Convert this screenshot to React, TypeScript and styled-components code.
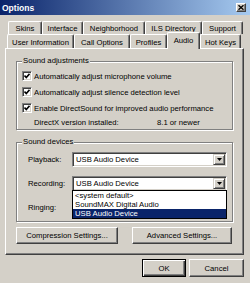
import React from "react";
import styled, { createGlobalStyle } from "styled-components";

const face = "#d4d0c8";
const shadow = "#808080";
const darkShadow = "#404040";
const navy = "#0a246a";

const GlobalStyle = createGlobalStyle`
  html, body {
    margin: 0;
    padding: 0;
    background: ${face};
  }
  body {
    font-family: "Liberation Sans", Arial, sans-serif;
    font-size: 7.7px;
    color: #000;
  }
`;

const Window = styled.div`
  width: 250px;
  height: 283px;
  overflow: hidden;
  background: ${face};
  display: flex;
  flex-direction: column;
`;

const TitleBar = styled.div`
  flex: none;
  height: 15px;
  display: flex;
  align-items: center;
  justify-content: space-between;
  padding: 0 4px 0 2px;
  background: linear-gradient(to right, ${navy}, #a6caf0);
  color: #fff;
  font-weight: bold;
  font-size: 8.5px;
`;

const CloseButton = styled.div`
  width: 10px;
  height: 9px;
  box-sizing: border-box;
  background: ${face};
  border: 1px solid;
  border-color: #fff ${darkShadow} ${darkShadow} #fff;
  box-shadow: inset -1px -1px ${shadow};
  display: flex;
  align-items: center;
  justify-content: center;
`;

const Body = styled.div`
  padding: 6px 6px 0 5px;
  display: flex;
  flex-direction: column;
`;

const TabRow = styled.div<{ $indent: number; $height: number }>`
  display: flex;
  align-items: flex-end;
  height: ${(p) => p.$height}px;
  padding-left: ${(p) => p.$indent}px;
`;

const Tab = styled.div<{ $width: number; $selected?: boolean; $front?: boolean }>`
  position: relative;
  z-index: ${(p) => (p.$selected ? 2 : 0)};
  width: ${(p) => p.$width}px;
  height: ${(p) => (p.$selected ? "calc(100% + 3px)" : "100%")};
  margin-bottom: ${(p) => (p.$selected ? "-1px" : "0")};
  box-sizing: border-box;
  flex: none;
  background: ${face};
  border-top: 1px solid #fff;
  border-left: 1px solid #fff;
  border-right: 1px solid ${darkShadow};
  box-shadow: inset -1px 0 ${shadow};
  border-radius: 2px 2px 0 0;
  display: flex;
  justify-content: center;
  align-items: center;
  padding-top: ${(p) => (p.$front && !p.$selected ? "2px" : "0")};
  padding-bottom: ${(p) => (p.$selected ? "2px" : "0")};
  white-space: nowrap;
`;

const Panel = styled.div`
  height: 207px;
  box-sizing: border-box;
  border: 1px solid;
  border-color: #fff ${darkShadow} ${darkShadow} #fff;
  box-shadow: inset -1px -1px ${shadow};
  padding: 7px 10px 0 10px;
  display: flex;
  flex-direction: column;
`;

const GroupBox = styled.fieldset<{ $top?: number; $padTop: number; $padBottom: number }>`
  margin: ${(p) => p.$top ?? 0}px 0 0 0;
  min-width: 0;
  border: 1px solid ${shadow};
  box-shadow: 1px 1px 0 #fff, inset 1px 1px 0 #fff;
  padding: ${(p) => p.$padTop}px 5px ${(p) => p.$padBottom}px 5px;
  display: flex;
  flex-direction: column;
`;

const Caption = styled.legend`
  padding: 0 1px;
  margin: 0;
  line-height: 10px;
  background: ${face};
`;

const CheckRow = styled.div`
  height: 16px;
  display: flex;
  align-items: center;
  gap: 2px;
  white-space: nowrap;
`;

const CheckBox = styled.span`
  flex: none;
  width: 10px;
  height: 10px;
  box-sizing: border-box;
  background: #fff;
  border: 1px solid;
  border-color: ${shadow} #fff #fff ${shadow};
  box-shadow: inset 1px 1px ${darkShadow}, inset -1px -1px ${face};
  display: flex;
  align-items: center;
  justify-content: center;
`;

const InfoRow = styled.div`
  height: 13px;
  display: flex;
  align-items: center;
  padding-left: 12px;
`;

const InfoLabel = styled.span`
  width: 123px;
  flex: none;
`;

const DeviceList = styled.div`
  display: flex;
  flex-direction: column;
  gap: 9px;
  padding-left: 6px;
`;

const DeviceRow = styled.div`
  height: 15px;
  display: flex;
  align-items: center;
`;

const DeviceLabel = styled.span`
  width: 44px;
  flex: none;
`;

const Combo = styled.div`
  position: relative;
  width: 155px;
  height: 15px;
  box-sizing: border-box;
  background: #fff;
  border: 1px solid;
  border-color: ${shadow} #fff #fff ${shadow};
  box-shadow: inset 1px 1px ${darkShadow}, inset -1px -1px ${face};
  display: flex;
  align-items: center;
  padding: 1px 1px 1px 3px;
  white-space: nowrap;
`;

const ComboText = styled.span`
  flex: 1;
`;

const ArrowButton = styled.span`
  flex: none;
  width: 12px;
  height: 11px;
  box-sizing: border-box;
  background: ${face};
  border: 1px solid;
  border-color: ${face} ${darkShadow} ${darkShadow} ${face};
  box-shadow: inset 1px 1px #fff, inset -1px -1px ${shadow};
  display: flex;
  align-items: center;
  justify-content: center;
`;

const DropList = styled.div`
  position: absolute;
  z-index: 3;
  left: -1px;
  top: 100%;
  width: 155px;
  box-sizing: border-box;
  background: #fff;
  border: 1px solid #000;
  display: flex;
  flex-direction: column;
`;

const DropItem = styled.div<{ $selected?: boolean }>`
  height: 9px;
  line-height: 9px;
  padding-left: 2px;
  background: ${(p) => (p.$selected ? navy : "#fff")};
  color: ${(p) => (p.$selected ? "#fff" : "#000")};
`;

const ButtonRow = styled.div`
  margin-top: 5px;
  display: flex;
  gap: 14px;
`;

const Button = styled.div<{ $width: number; $height?: number; $default?: boolean }>`
  width: ${(p) => p.$width}px;
  height: ${(p) => p.$height ?? 17}px;
  box-sizing: border-box;
  flex: none;
  background: ${face};
  border: 1px solid;
  border-color: ${(p) => (p.$default ? "#000" : `#fff ${darkShadow} ${darkShadow} #fff`)};
  box-shadow: ${(p) =>
    p.$default
      ? `inset 1px 1px #fff, inset -1px -1px ${darkShadow}, inset -2px -2px ${shadow}`
      : `inset -1px -1px ${shadow}`};
  display: flex;
  align-items: center;
  justify-content: center;
  white-space: nowrap;
`;

const Footer = styled.div`
  margin-top: 4px;
  display: flex;
  justify-content: flex-end;
  gap: 3px;
`;

const Check = () => (
  <svg width="6" height="6" viewBox="0 0 6 6">
    <polyline points="0.5,2.5 2.3,4.5 5.5,0.8" fill="none" stroke="#000" strokeWidth="1.6" />
  </svg>
);

const Arrow = () => (
  <svg width="5" height="3" viewBox="0 0 5 3">
    <polygon points="0,0 5,0 2.5,3" fill="#000" />
  </svg>
);

const row1 = [
  { label: "Skins", width: 34 },
  { label: "Interface", width: 41 },
  { label: "Neighborhood", width: 62 },
  { label: "ILS Directory", width: 57 },
  { label: "Support", width: 41 },
];

const row2 = [
  { label: "User Information", width: 67 },
  { label: "Call Options", width: 56 },
  { label: "Profiles", width: 37 },
  { label: "Audio", width: 33, selected: true },
  { label: "Hot Keys", width: 41 },
];

const checks = [
  "Automatically adjust microphone volume",
  "Automatically adjust silence detection level",
  "Enable DirectSound for improved audio performance",
];

const App = () => {
  return (
    <Window>
      <GlobalStyle />
      <TitleBar>
        <span>Options</span>
        <CloseButton>
          <svg width="6" height="5" viewBox="0 0 6 5">
            <path d="M0.5 0.3 L5.5 4.7 M5.5 0.3 L0.5 4.7" stroke="#000" strokeWidth="1.4" />
          </svg>
        </CloseButton>
      </TitleBar>

      <Body>
        <TabRow $indent={3} $height={13}>
          {row1.map((t) => (
            <Tab key={t.label} $width={t.width}>{t.label}</Tab>
          ))}
        </TabRow>
        <TabRow $indent={2} $height={14}>
          {row2.map((t) => (
            <Tab key={t.label} $width={t.width} $selected={t.selected} $front>{t.label}</Tab>
          ))}
        </TabRow>

        <Panel>
          <GroupBox $padTop={2} $padBottom={0}>
            <Caption>Sound adjustments</Caption>
            {checks.map((c) => (
              <CheckRow key={c}>
                <CheckBox><Check /></CheckBox>
                <span>{c}</span>
              </CheckRow>
            ))}
            <InfoRow>
              <InfoLabel>DirectX version installed:</InfoLabel>
              <span>8.1 or newer</span>
            </InfoRow>
          </GroupBox>

          <GroupBox $top={7} $padTop={5} $padBottom={6}>
            <Caption>Sound devices</Caption>
            <DeviceList>
              <DeviceRow>
                <DeviceLabel>Playback:</DeviceLabel>
                <Combo>
                  <ComboText>USB Audio Device</ComboText>
                  <ArrowButton><Arrow /></ArrowButton>
                </Combo>
              </DeviceRow>
              <DeviceRow>
                <DeviceLabel>Recording:</DeviceLabel>
                <Combo>
                  <ComboText>USB Audio Device</ComboText>
                  <ArrowButton><Arrow /></ArrowButton>
                  <DropList>
                    <DropItem>&lt;system default&gt;</DropItem>
                    <DropItem>SoundMAX Digital Audio</DropItem>
                    <DropItem $selected>USB Audio Device</DropItem>
                  </DropList>
                </Combo>
              </DeviceRow>
              <DeviceRow>
                <DeviceLabel>Ringing:</DeviceLabel>
                {/* covered by the open Recording list */}
                <Combo>
                  <ComboText />
                  <ArrowButton><Arrow /></ArrowButton>
                </Combo>
              </DeviceRow>
            </DeviceList>
          </GroupBox>

          <ButtonRow>
            <Button $width={102}>Compression Settings...</Button>
            <Button $width={100}>Advanced Settings...</Button>
          </ButtonRow>
        </Panel>

        <Footer>
          <Button $width={44} $height={18} $default>OK</Button>
          <Button $width={55} $height={18}>Cancel</Button>
        </Footer>
      </Body>
    </Window>
  );
};

export default App;
